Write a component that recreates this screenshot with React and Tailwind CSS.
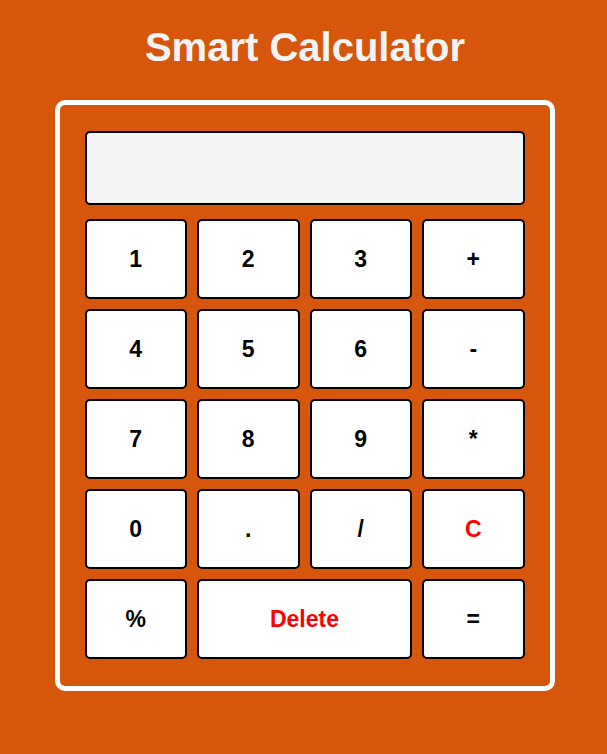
import React, { useState } from 'react';

const keys = [
  { label: '1' }, { label: '2' }, { label: '3' }, { label: '+' },
  { label: '4' }, { label: '5' }, { label: '6' }, { label: '-' },
  { label: '7' }, { label: '8' }, { label: '9' }, { label: '*' },
  { label: '0' }, { label: '.' }, { label: '/' }, { label: 'C', red: true },
  { label: '%' }, { label: 'Delete', red: true, wide: true }, { label: '=' },
];

const App = () => {
  const [value, setValue] = useState('');

  const press = (k) => {
    if (k === 'C') return setValue('');
    if (k === 'Delete') return setValue((v) => v.slice(0, -1));
    if (k === '=') {
      try {
        // eslint-disable-next-line no-new-func
        setValue(String(Function('return (' + value + ')')()));
      } catch {
        setValue('Error');
      }
      return;
    }
    setValue((v) => v + k);
  };

  return (
    <div className="min-h-screen bg-[#d6560c] pt-[24px] font-['Liberation_Sans',Arial,sans-serif]">
      <h1 className="text-center text-[40px] font-bold leading-[46px] text-[#f4f4f4] pl-[3px]">Smart Calculator</h1>

      <div className="mx-auto mt-[30px] w-[500px] translate-x-[1px] rounded-[10px] border-[5px] border-white px-[25px] pt-[26px] pb-[27px]">
        <input
          readOnly
          value={value}
          className="mb-[14px] block h-[74px] w-full rounded-[5px] border-2 border-black bg-[#f4f4f4] px-3 text-right text-[28px] outline-none"
        />
        <div className="grid grid-cols-4 gap-[10px]">
          {keys.map((k) => (
            <button
              key={k.label}
              onClick={() => press(k.label)}
              className={
                'h-[80px] rounded-[5px] border-2 border-black bg-white text-[23px] font-bold ' +
                (k.red ? 'text-[#ff0000] ' : 'text-black ') +
                (k.wide ? 'col-span-2' : '')
              }
            >
              {k.label}
            </button>
          ))}
        </div>
      </div>
    </div>
  );
};

export default App;
